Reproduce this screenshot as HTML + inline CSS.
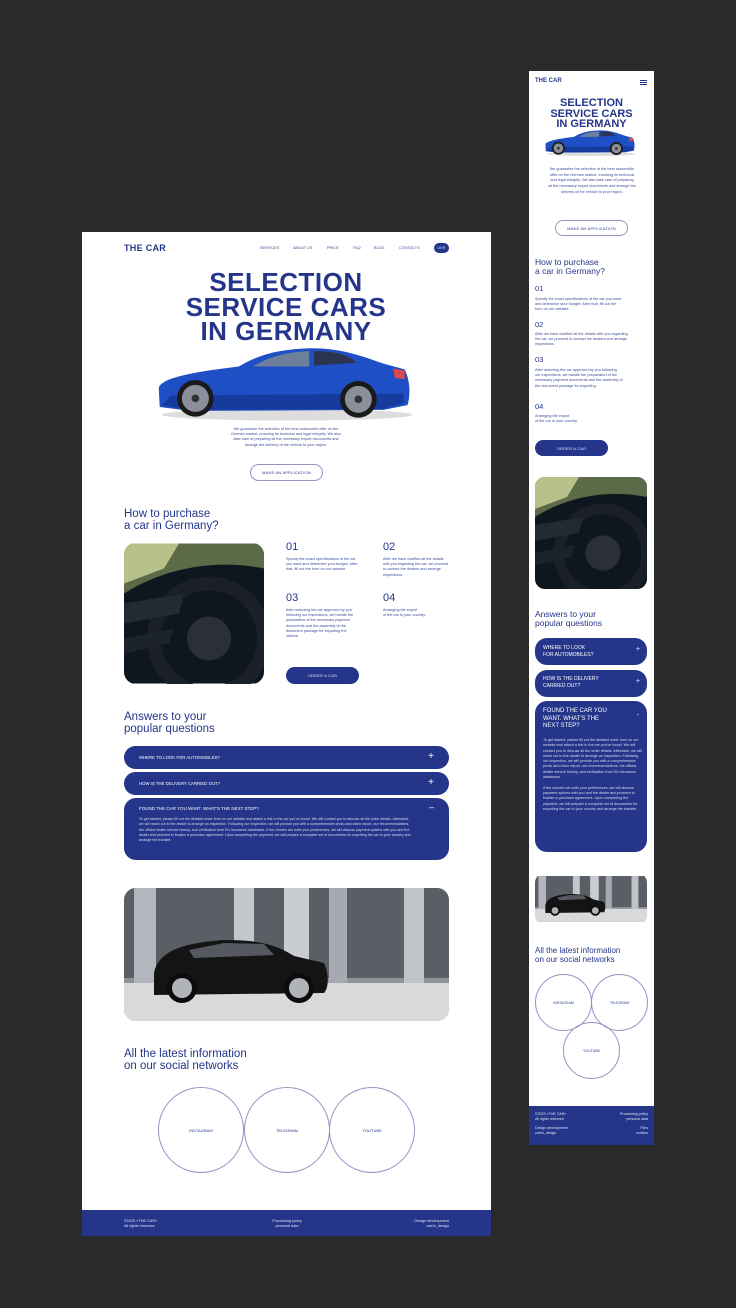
<!DOCTYPE html>
<html><head><meta charset="utf-8"><style>
*{margin:0;padding:0;box-sizing:border-box}
body{width:736px;height:1308px;background:#2a2a2a;position:relative;overflow:hidden;font-family:"Liberation Sans",sans-serif;color:#24358a}
.a{position:absolute}
.frame{background:#fff}
.t{position:absolute;white-space:nowrap}
.small{font-size:4px;line-height:5.2px;color:#3d4c99}
.blue{background:#24358a}
.btn{position:absolute;border-radius:20px;font-size:4px;display:flex;align-items:center;justify-content:center;letter-spacing:.2px}
.ol{border:1px solid #8f98c6;color:#24358a}
.fill{background:#24358a;color:#dfe3f3}
.faq{position:absolute;background:#24358a;border-radius:12px;color:#fff}
.circ{position:absolute;border:1px solid #8e96c4;border-radius:50%;display:flex;align-items:center;justify-content:center;font-size:4px;color:#24358a}
h2{position:absolute;font-weight:normal;color:#24358a}
</style></head><body>
<svg width="0" height="0" style="position:absolute">
<defs>
<symbol id="car" viewBox="0 0 280 90">
<ellipse cx="140" cy="80" rx="130" ry="6" fill="#bbb" opacity=".5"/>
<path d="M7,52 C10,42 40,36 90,30 C110,18 130,12 165,11 C195,11 215,18 240,27 L262,33 C268,45 268,60 265,70 L240,75 L40,76 L8,72 Z" fill="#1f4fc4"/>
<path d="M20,60 L260,58 L262,68 L240,74 L40,75 L10,70 Z" fill="#163b9e"/>
<path d="M105,30 C120,20 140,15 163,14 L163,30 Z" fill="#6d7f9a"/>
<path d="M168,14 C190,14 205,18 212,26 L168,29 Z" fill="#2b3550"/>
<path d="M250,32 L262,34 L262,43 L252,42 Z" fill="#d94a4a"/>
<circle cx="45" cy="63" r="19" fill="#1a1a1a"/><circle cx="45" cy="63" r="14" fill="#8a8f99"/><circle cx="45" cy="63" r="4" fill="#333"/>
<circle cx="214" cy="64" r="19" fill="#1a1a1a"/><circle cx="214" cy="64" r="14" fill="#8a8f99"/><circle cx="214" cy="64" r="4" fill="#333"/>
</symbol>
<symbol id="wheel" viewBox="0 0 140 140">
<rect width="140" height="140" fill="#0e1620"/>
<path d="M0,0 H140 V25 C90,15 40,25 0,50 Z" fill="#5d6a48"/>
<path d="M0,0 H55 L40,25 L0,40 Z" fill="#b9c18a"/>
<circle cx="85" cy="95" r="55" fill="none" stroke="#1b1f26" stroke-width="14"/>
<circle cx="85" cy="95" r="22" fill="#2a2f38"/>
<path d="M0,60 L60,50 L55,70 L0,80 Z" fill="#222a33"/>
<path d="M0,95 L50,85 L45,100 L0,110 Z" fill="#1d232b"/>
</symbol>
<symbol id="suv" viewBox="0 0 325 133">
<rect width="325" height="133" fill="#8e9299"/>
<rect x="0" y="0" width="325" height="90" fill="#5a5f66"/>
<rect x="10" y="0" width="22" height="95" fill="#b3b7bd"/><rect x="110" y="0" width="20" height="95" fill="#c3c6cb"/><rect x="160" y="0" width="25" height="95" fill="#c9ccd0"/><rect x="205" y="0" width="18" height="95" fill="#a6aab0"/><rect x="280" y="0" width="20" height="95" fill="#c0c3c8"/>
<rect x="0" y="95" width="325" height="38" fill="#d8d9db"/>
<path d="M30,85 C35,62 60,55 100,52 C130,52 150,55 170,68 L200,75 C205,85 205,100 200,105 L30,107 Z" fill="#141414"/>
<path d="M65,62 L100,55 L140,56 L150,67 L70,70 Z" fill="#55595f"/>
<circle cx="58" cy="100" r="15" fill="#0c0c0c"/><circle cx="58" cy="100" r="10" fill="#b0b3b8"/>
<circle cx="175" cy="100" r="15" fill="#0c0c0c"/><circle cx="175" cy="100" r="10" fill="#b0b3b8"/>
</symbol>
</defs></svg>

<!-- DESKTOP -->
<div class="a frame" style="left:82px;top:232px;width:409px;height:1004px"></div>
<div class="t" style="left:124px;top:243px;font-size:9px;font-weight:bold;letter-spacing:.3px">THE CAR</div>
<div class="t small" style="left:260px;top:246px;font-size:3.8px">SERVICES</div>
<div class="t small" style="left:293px;top:246px;font-size:3.8px">ABOUT US</div>
<div class="t small" style="left:327px;top:246px;font-size:3.8px">PRICE</div>
<div class="t small" style="left:353px;top:246px;font-size:3.8px">FAQ</div>
<div class="t small" style="left:374px;top:246px;font-size:3.8px">BLOG</div>
<div class="t small" style="left:399px;top:246px;font-size:3.8px">CONTACTS</div>
<div class="btn fill" style="left:434px;top:243px;width:15px;height:10px;font-size:3.5px">UKR</div>
<div class="a" style="left:120px;top:270px;width:332px;text-align:center;font-size:26px;line-height:24.5px;font-weight:bold;letter-spacing:.5px">SELECTION<br>SERVICE CARS<br>IN GERMANY</div>
<svg class="a" style="left:152px;top:337px" width="270" height="88"><use href="#car" width="270" height="88"/></svg>
<div class="a small" style="left:230px;top:427px;width:112px;text-align:center;font-size:3.8px">We guarantee the selection of the best automobile offer on the German market, ensuring its technical and legal integrity. We also take care of preparing all the necessary export documents and arrange the delivery of the vehicle to your region.</div>
<div class="btn ol" style="left:250px;top:464px;width:73px;height:17px">MAKE AN APPLICATION</div>

<h2 style="left:124px;top:509px;font-size:11.5px;line-height:11.5px">How to purchase<br>a car in Germany?</h2>
<svg class="a" style="left:124px;top:543px;border-radius:12px" width="140" height="141"><use href="#wheel" width="140" height="141"/></svg>
<div class="t" style="left:286px;top:541px;font-size:11px">01</div>
<div class="a small" style="left:286px;top:557px;width:72px;font-size:3.8px">Specify the exact specifications of the car you want and determine your budget. After that, fill out the form on our website.</div>
<div class="t" style="left:383px;top:541px;font-size:11px">02</div>
<div class="a small" style="left:383px;top:557px;width:68px;font-size:3.8px">After we have clarified all the details with you regarding the car, we proceed to contact the dealers and arrange inspections.</div>
<div class="t" style="left:286px;top:592px;font-size:11px">03</div>
<div class="a small" style="left:286px;top:608px;width:72px;font-size:3.8px">After selecting the car approved by you following our inspections, we handle the preparation of the necessary payment documents and the assembly of the document package for exporting the vehicle.</div>
<div class="t" style="left:383px;top:592px;font-size:11px">04</div>
<div class="a small" style="left:383px;top:608px;width:68px;font-size:3.8px">Arranging the export<br>of the car to your country.</div>
<div class="btn fill" style="left:286px;top:667px;width:73px;height:17px">ORDER A CAR</div>

<h2 style="left:124px;top:712px;font-size:11.5px;line-height:11.5px">Answers to your<br>popular questions</h2>
<div class="faq" style="left:124px;top:746px;width:325px;height:23px"><span class="t" style="left:15px;top:9px;font-size:4.3px">WHERE TO LOOK FOR AUTOMOBILES?</span><span class="t" style="right:15px;top:5px;font-size:10px">+</span></div>
<div class="faq" style="left:124px;top:772px;width:325px;height:23px"><span class="t" style="left:15px;top:9px;font-size:4.3px">HOW IS THE DELIVERY CARRIED OUT?</span><span class="t" style="right:15px;top:5px;font-size:10px">+</span></div>
<div class="faq" style="left:124px;top:798px;width:325px;height:62px"><span class="t" style="left:15px;top:8px;font-size:4.5px">FOUND THE CAR YOU WANT. WHAT'S THE NEXT STEP?</span><span class="t" style="right:15px;top:4px;font-size:9px">–</span>
<div class="a" style="left:15px;top:19px;width:272px;font-size:3.6px;line-height:5.3px;color:#d8dcef">To get started, please fill out the detailed order form on our website and attach a link to the car you've found. We will contact you to discuss all the order details. Afterward, we will reach out to the dealer to arrange an inspection. Following our inspection, we will provide you with a comprehensive photo and video report, our recommendations, the official dealer service history, and verification from EU insurance databases. If the chosen car suits your preferences, we will discuss payment options with you and the dealer and proceed to finalize a purchase agreement. Upon completing the payment, we will prepare a complete set of documents for exporting the car to your country and arrange the transfer.</div></div>

<svg class="a" style="left:124px;top:888px;border-radius:12px" width="325" height="133"><use href="#suv" width="325" height="133"/></svg>

<h2 style="left:124px;top:1049px;font-size:11.5px;line-height:11.5px">All the latest information<br>on our social networks</h2>
<div class="circ" style="left:158px;top:1087px;width:86px;height:86px">INSTAGRAM</div>
<div class="circ" style="left:244px;top:1087px;width:86px;height:86px">TELEGRAM</div>
<div class="circ" style="left:329px;top:1087px;width:86px;height:86px">YOUTUBE</div>
<div class="a blue" style="left:82px;top:1210px;width:409px;height:26px"></div>
<div class="a" style="left:124px;top:1219px;font-size:3.8px;line-height:5px;color:#dfe3f3">©2023 «THE CAR»<br>All rights reserved</div>
<div class="a" style="left:262px;top:1219px;width:50px;text-align:center;font-size:3.8px;line-height:5px;color:#dfe3f3">Processing policy<br>personal data</div>
<div class="a" style="left:389px;top:1219px;width:60px;text-align:right;font-size:3.8px;line-height:5px;color:#dfe3f3">Design development<br>catrin_design</div>

<!-- MOBILE -->
<div class="a frame" style="left:529px;top:71px;width:125px;height:1074px"></div>
<div class="t" style="left:535px;top:78px;font-size:6px;font-weight:bold">THE CAR</div>
<div class="a" style="left:640px;top:80px;width:7px;height:1px;background:#24358a;box-shadow:0 2px 0 #24358a,0 4px 0 #24358a"></div>
<div class="a" style="left:529px;top:98px;width:125px;text-align:center;font-size:11px;line-height:10.5px;font-weight:bold">SELECTION<br>SERVICE CARS<br>IN GERMANY</div>
<svg class="a" style="left:543px;top:125px" width="96" height="34"><use href="#car" width="96" height="34"/></svg>
<div class="a small" style="left:548px;top:167px;width:88px;text-align:center;font-size:3.8px;line-height:5.7px">We guarantee the selection of the best automobile offer on the German market, ensuring its technical and legal integrity. We also take care of preparing all the necessary export documents and arrange the delivery of the vehicle to your region.</div>
<div class="btn ol" style="left:555px;top:220px;width:73px;height:16px">MAKE AN APPLICATION</div>
<h2 style="left:535px;top:258px;font-size:8.5px;line-height:9px">How to purchase<br>a car in Germany?</h2>
<div class="t" style="left:535px;top:284px;font-size:7.5px">01</div>
<div class="a small" style="left:535px;top:297px;width:88px;font-size:3.8px">Specify the exact specifications of the car you want and determine your budget. After that, fill out the form on our website.</div>
<div class="t" style="left:535px;top:320px;font-size:7.5px">02</div>
<div class="a small" style="left:535px;top:332px;width:98px;font-size:3.8px">After we have clarified all the details with you regarding the car, we proceed to contact the dealers and arrange inspections.</div>
<div class="t" style="left:535px;top:355px;font-size:7.5px">03</div>
<div class="a small" style="left:535px;top:368px;width:88px;font-size:3.8px">After selecting the car approved by you following our inspections, we handle the preparation of the necessary payment documents and the assembly of the document package for exporting.</div>
<div class="t" style="left:535px;top:402px;font-size:7.5px">04</div>
<div class="a small" style="left:535px;top:414px;width:95px;font-size:3.8px">Arranging the export<br>of the car to your country.</div>
<div class="btn fill" style="left:535px;top:440px;width:73px;height:16px">ORDER A CAR</div>
<svg class="a" style="left:535px;top:477px;border-radius:10px" width="112" height="112"><use href="#wheel" width="112" height="112"/></svg>
<h2 style="left:535px;top:610px;font-size:8.5px;line-height:9px">Answers to your<br>popular questions</h2>
<div class="faq" style="left:535px;top:638px;width:112px;height:27px"><span class="a" style="left:8px;top:7px;font-size:5px;line-height:7px">WHERE TO LOOK<br>FOR AUTOMOBILES?</span><span class="t" style="right:7px;top:8px;font-size:7px">+</span></div>
<div class="faq" style="left:535px;top:670px;width:112px;height:27px"><span class="a" style="left:8px;top:6px;font-size:5px;line-height:7px">HOW IS THE DELIVERY<br>CARRIED OUT?</span><span class="t" style="right:7px;top:8px;font-size:7px">+</span></div>
<div class="faq" style="left:535px;top:701px;width:112px;height:151px"><span class="a" style="left:8px;top:7px;font-size:6px;line-height:7.5px">FOUND THE CAR YOU<br>WANT. WHAT'S THE<br>NEXT STEP?</span><span class="t" style="right:8px;top:11px;font-size:7px">-</span>
<div class="a" style="left:8px;top:37px;width:100px;font-size:3.7px;line-height:5.3px;color:#d8dcef">To get started, please fill out the detailed order form on our website and attach a link to the car you've found. We will contact you to discuss all the order details. Afterward, we will reach out to the dealer to arrange an inspection. Following our inspection, we will provide you with a comprehensive photo and video report, our recommendations, the official dealer service history, and verification from EU insurance databases.<br><br>If the chosen car suits your preferences, we will discuss payment options with you and the dealer and proceed to finalize a purchase agreement. Upon completing the payment, we will prepare a complete set of documents for exporting the car to your country and arrange the transfer.</div></div>
<svg class="a" style="left:535px;top:873px;border-radius:10px" width="112" height="52" preserveAspectRatio="none"><use href="#suv" width="112" height="52"/></svg>
<h2 style="left:535px;top:947px;font-size:8px;line-height:8.5px">All the latest information<br>on our social networks</h2>
<div class="circ" style="left:535px;top:974px;width:57px;height:57px;font-size:3.5px">INSTAGRAM</div>
<div class="circ" style="left:591px;top:974px;width:57px;height:57px;font-size:3.5px">TELEGRAM</div>
<div class="circ" style="left:563px;top:1022px;width:57px;height:57px;font-size:3.5px">YOUTUBE</div>
<div class="a blue" style="left:529px;top:1106px;width:125px;height:39px"></div>
<div class="a" style="left:535px;top:1112px;font-size:3.6px;line-height:4.8px;color:#dfe3f3">©2023 «THE CAR»<br>All rights reserved<br><br>Design development<br>catrin_design</div>
<div class="a" style="left:600px;top:1112px;width:48px;text-align:right;font-size:3.6px;line-height:4.8px;color:#dfe3f3">Processing policy<br>personal data<br><br>Files<br>cookies</div>
</body></html>
